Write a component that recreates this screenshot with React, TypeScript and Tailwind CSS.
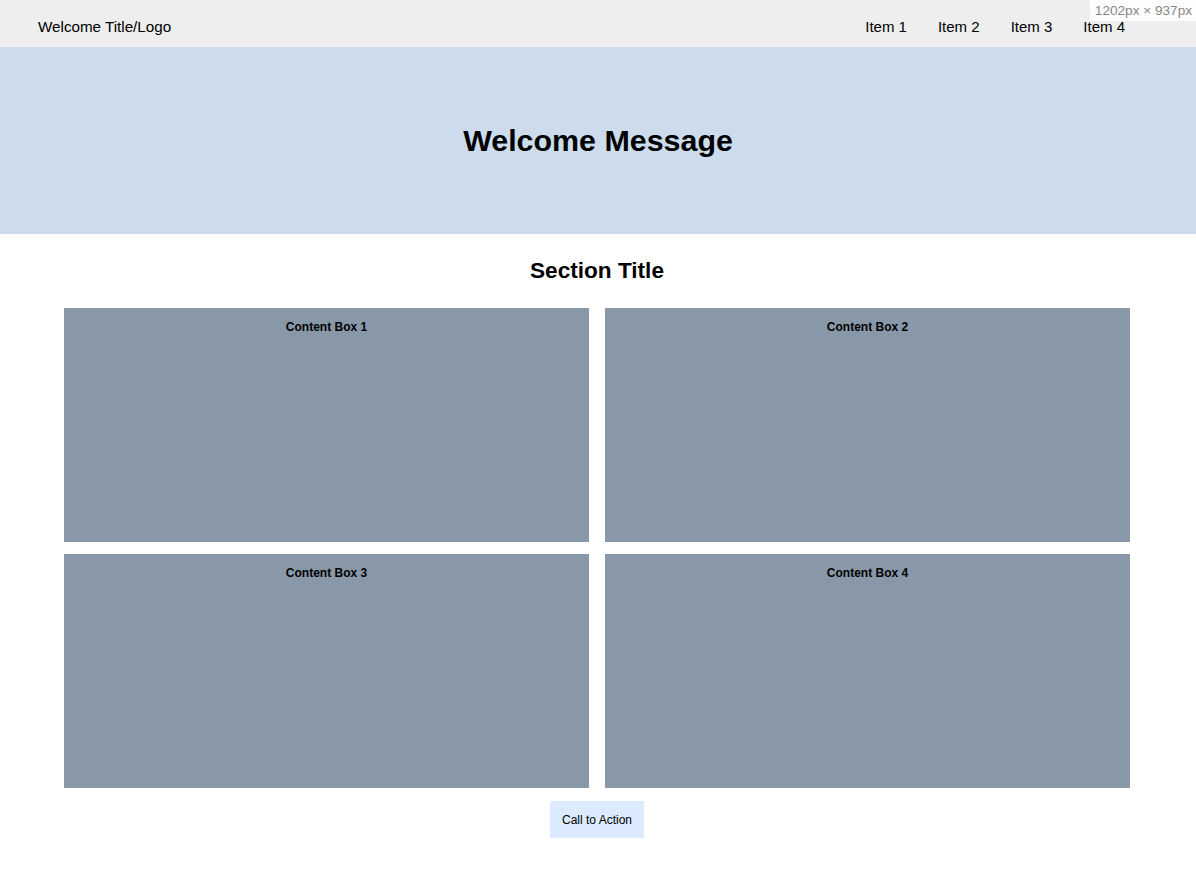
const navItems = ['Item 1', 'Item 2', 'Item 3', 'Item 4'];
const boxes = ['Content Box 1', 'Content Box 2', 'Content Box 3', 'Content Box 4'];

export default function App() {
    return (
        <div className="relative min-h-screen bg-white text-black" style={{ fontFamily: '"Liberation Sans", Arial, sans-serif' }}>
            {/* Size readout left on the capture */}
            <div className="absolute top-0 right-0 h-[21px] pl-[5px] pr-[4px] bg-white/90 text-[13.6px] leading-[21px] text-[#888]">
                1202px × 937px
            </div>

            {/* Header */}
            <header className="h-[47px] bg-[#eeeeee] flex items-center justify-between pl-[38px] pr-[71px] pt-[7px]">
                <div className="text-[15.2px]">Welcome Title/Logo</div>
                <nav className="flex gap-[31px] text-[15px]">
                    {navItems.map((item) => (
                        <a key={item} className="cursor-pointer">{item}</a>
                    ))}
                </nav>
            </header>

            {/* Hero */}
            <section className="h-[187px] bg-[#ccdcec] flex items-center justify-center">
                <h1 className="text-[30.4px] font-bold">Welcome Message</h1>
            </section>

            {/* Content */}
            <main className="pl-[64px] pr-[66px] pt-[24px] pb-[40px] flex flex-col items-center">
                <h2 className="text-[22.6px] font-bold leading-[26px] mb-[24px]">Section Title</h2>
                <div className="w-full grid grid-cols-2 gap-x-[16px] gap-y-[12px]">
                    {boxes.map((box) => (
                        <div key={box} className="h-[234px] bg-[#8898a8] flex justify-center pt-[12px]">
                            <span className="text-[12px] font-bold leading-[14px]">{box}</span>
                        </div>
                    ))}
                </div>
                <button className="mt-[13px] w-[94px] h-[37px] bg-[#dbeafe] text-[12px]">
                    Call to Action
                </button>
            </main>
        </div>
    );
}
